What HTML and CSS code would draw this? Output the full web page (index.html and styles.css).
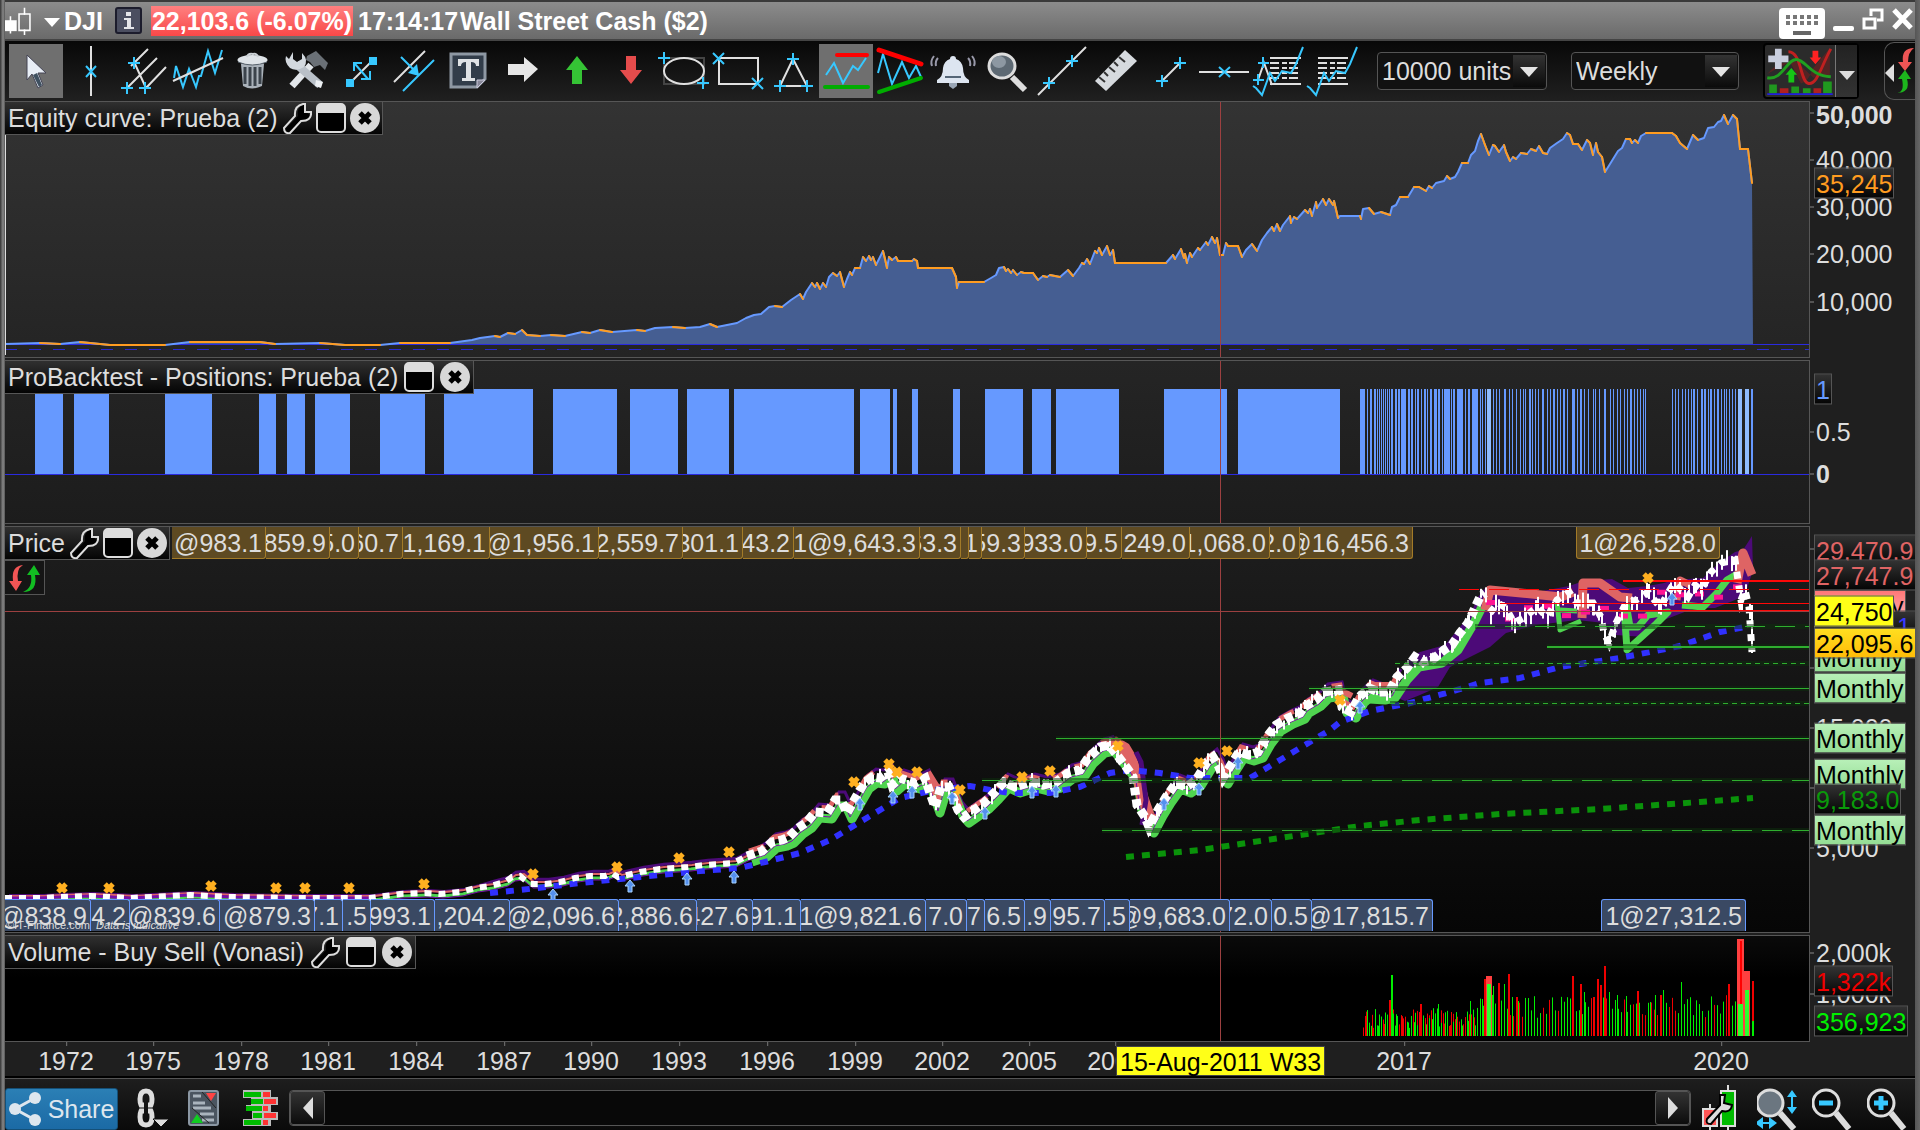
FILE: index.html
```html
<!DOCTYPE html>
<html lang="en">
<head>
<meta charset="utf-8">
<title>DJI - Wall Street Cash ($2)</title>
<link rel="stylesheet" href="styles.css">
</head>
<body>
<div class="app">
<header class="titlebar">
  <svg class="candles" width="50" height="36" viewBox="0 0 50 36"><g stroke="#fff" stroke-width="2" fill="none"><path d="M7 12v22M25 1v9M25 29v7"/><path d="M0 17h15v14H0z" fill="#fff" stroke="none"/><path d="M18 9h14v21H18z"/></g></svg>
  <svg class="caret" width="16" height="9" viewBox="0 0 16 9"><path d="M0 0h16L8 9z" fill="#fff"/></svg>
  <strong class="symbol">DJI</strong>
  <button class="info" aria-label="Instrument information"><svg width="27" height="27" viewBox="0 0 27 27"><rect x="1" y="1" width="25" height="25" rx="2" fill="#4b4e60" stroke="#1c1c2c" stroke-width="2"/><path d="M11 5h5v4h-5zM9 11h7v9h3v2H9v-2h3v-7H9z" fill="#e4e4e8"/></svg></button>
  <strong class="quote">22,103.6 (-6.07%)</strong>
  <strong class="clock">17:14:17</strong>
  <strong class="name">Wall Street Cash ($2)</strong>
  <div class="winbuttons">
    <button aria-label="Keyboard"><svg width="46" height="32" viewBox="0 0 46 32"><rect y="1" width="46" height="31" rx="4" fill="#fff"/><path d="M7 10h33M7 16h33M7 22h33" stroke="#777" stroke-width="4" stroke-dasharray="4 3"/><path d="M6 20h35v4H6z" fill="#fff"/><path d="M14 26h18" stroke="#666" stroke-width="4"/></svg></button>
    <button aria-label="Minimize"><svg width="21" height="32" viewBox="0 0 21 32"><rect y="19" width="21" height="5" rx="2" fill="#fff"/></svg></button>
    <button aria-label="Restore"><svg width="22" height="32" viewBox="0 0 22 32"><path d="M9 9V3h11v10h-5M2 12h11v9H2z" fill="none" stroke="#fff" stroke-width="3"/></svg></button>
    <button aria-label="Close"><svg width="22" height="32" viewBox="0 0 22 32"><path d="M2 3l17 18M19 3L2 21" stroke="#fff" stroke-width="5"/></svg></button>
  </div>
</header>

<nav class="toolbar" aria-label="Drawing tools">
  <div class="tools">
  <button class="tool on" aria-label="Select"><svg viewBox="0 0 54 54"><path d="M18 11v25l5-6 6 14 5-3-5-12h8z" fill="#e8eef6" stroke="#445"/><path d="M24 31l6 12 3-2-5-12z" fill="#3f5060"/></svg></button>
  <button class="tool" aria-label="Vertical line"><svg viewBox="0 0 54 54"><path class="g" d="M28 2v50"/><path class="b" d="M23 22l10 11M33 22L23 33"/></svg></button>
  <button class="tool" aria-label="Pitchfork"><svg viewBox="0 0 54 54"><path class="g" d="M14 22L31 5M10 44L40 14M29 44l20-21M18 20l11 24"/><path class="b" d="M17 13v12M11 19h12M10 38v12M4 44h12M28 38v12M22 44h12"/></svg></button>
  <button class="tool" aria-label="Regression"><svg viewBox="0 0 54 54"><path class="b" d="M3 34l2-12 7 21 6-18 7 18 3-11h2l7-25 7 22 7-23"/><path class="g" d="M2 37l50-23"/></svg></button>
  <button class="tool" aria-label="Delete"><svg viewBox="0 0 54 54"><path d="M16 20h23l-2 22q-10 5-19 0z" fill="#aab2ba"/><path d="M20 23v17M25 23v19M30 23v19M35 23v17" stroke="#3b434b" stroke-width="3"/><ellipse cx="27.500" cy="16" rx="15" ry="5" fill="#dfe4e8"/><path d="M22 13q1-4 6-3 4-1 5 3" fill="none" stroke="#ccd2d6" stroke-width="2"/><path d="M13 18q14 6 29 0" stroke="#56606a" fill="none"/></svg></button>
  <button class="tool" aria-label="Settings"><svg viewBox="0 0 54 54"><path d="M28 12l9-5 12 12-3 7-5-5-6 2-4-5-4-2z" fill="#6a7076"/><path d="M32 21L13 42" stroke="#e2e6ea" stroke-width="7"/><path d="M17 20l24 21" stroke="#b9c0c8" stroke-width="8"/><path d="M14 8v7l4 3 5-3V9q7 7 2 14-8 5-14 1-6-6-4-12l3 3z" fill="#d3d9df"/><path d="M37 36l7 2-2 6-6-2z" fill="#edf0f3"/></svg></button>
  <button class="tool" aria-label="Fibonacci extension"><svg viewBox="0 0 54 54"><path class="g" d="M17 39l22-22"/><path class="b" d="M22 20l13 15M21 27v-8h8M37 27v8h-9"/><path d="M36 13h8v8h-8zM13 35h8v8h-8z" fill="#37c8ff"/></svg></button>
  <button class="tool" aria-label="Parallel lines"><svg viewBox="0 0 54 54"><path class="g" d="M7 38L38 7"/><path class="b" d="M16 47l31-31M14 13l17 17"/><path d="M32 32l-2-12-9 9z" fill="#37c8ff"/></svg></button>
  <button class="tool" aria-label="Text"><svg viewBox="0 0 54 54"><path d="M10 10h34v25l-8 8H10z" fill="#323d4a" stroke="#8e98a3" stroke-width="3"/><path d="M17 15h21v7h-3q0-4-5-4v16h4v3H21v-3h4V18q-5 0-5 4h-3z" fill="#dfe2e5"/><path d="M36 44v-8h8z" fill="#889" stroke="#ccd"/></svg></button>
  <button class="tool" aria-label="Right arrow"><svg viewBox="0 0 54 54"><path d="M13 20h16v-7l14 12-14 13v-7H13z" fill="#e6e6e6"/></svg></button>
  <button class="tool" aria-label="Up arrow"><svg viewBox="0 0 54 54"><path d="M28 12l11 14h-6v14H23V26h-6z" fill="#35c335"/></svg></button>
  <button class="tool" aria-label="Down arrow"><svg viewBox="0 0 54 54"><path d="M28 40l11-14h-6V12H23v14h-6z" fill="#e54c4c"/></svg></button>
  <button class="tool" aria-label="Ellipse"><svg viewBox="0 0 54 54"><path d="M7 14h40v26H7z" fill="none" stroke="#444" stroke-width="2"/><ellipse class="g" cx="27" cy="27" rx="20" ry="13"/><path class="b" d="M7 8v12M1 14h12M46 33v12M40 39h12"/></svg></button>
  <button class="tool" aria-label="Rectangle"><svg viewBox="0 0 54 54"><path class="g" d="M8 14h39v26H8z"/><path class="b" d="M2 9l11 11M13 9L2 20M41 34l11 11M52 34L41 45"/></svg></button>
  <button class="tool" aria-label="Triangle"><svg viewBox="0 0 54 54"><path class="g" d="M28 15L15 42h27z"/><path class="b" d="M28 9v12M22 15h12M15 36v12M9 42h12M42 36v12M36 42h12"/></svg></button>
  <button class="tool on" aria-label="Support and resistance"><svg viewBox="0 0 54 54"><path class="b" d="M7 31l8-12 9 20 10-17 5 4 8-12"/><path d="M18 11h30" stroke="#f00" stroke-width="4" stroke-linecap="round"/><path d="M6 43h43" stroke="#00ac00" stroke-width="4" stroke-linecap="round"/></svg></button>
  <button class="tool" aria-label="Pattern detection"><svg viewBox="0 0 54 54"><path class="b" d="M5 29l5-19 9 30 10-22 7 16 7-12 5 11"/><path d="M6 6l42 14" stroke="#f00" stroke-width="5" stroke-linecap="round"/><path d="M6 48l42-14" stroke="#00ac00" stroke-width="4" stroke-linecap="round"/></svg></button>
  <button class="tool" aria-label="Alert"><svg viewBox="0 0 54 54"><path d="M26 12q3 0 3 3 6 2 7 9 0 9 6 12v3H10v-3q6-3 6-12 1-7 7-9 0-3 3-3z" fill="#dde5f0"/><path d="M18 33h16" stroke="#567" stroke-width="2"/><path d="M22 39h8v3l-4 3-4-3z" fill="#9aa6b5"/><path d="M11 14q-3 3-2 8M7 12q-4 5-2 10M41 14q3 3 2 8M45 12q4 5 2 10" fill="none" stroke="#99a" stroke-width="2"/></svg></button>
  <button class="tool" aria-label="Zoom"><svg viewBox="0 0 54 54"><path d="M31 33l13 13" stroke="#ddd" stroke-width="6"/><ellipse cx="21" cy="22" rx="13" ry="12" fill="#5d6973" stroke="#ddd" stroke-width="3"/><ellipse cx="18" cy="18" rx="7" ry="6" fill="#8d98a2"/></svg></button>
  <button class="tool" aria-label="Line"><svg viewBox="0 0 54 54"><path class="g" d="M3 51L51 3"/><path class="b" d="M14 33v12M8 39h12M37 11v12M31 17h12"/></svg></button>
  <button class="tool" aria-label="Ruler"><svg viewBox="0 0 54 54"><path d="M6 37L36 6l12 11-31 30z" fill="#d6dade"/><path d="M10 33l6 5M15 28l4 4M20 23l6 5M25 18l4 4M30 13l6 5" stroke="#333" stroke-width="2"/></svg></button>
  <button class="tool" aria-label="Segment"><svg viewBox="0 0 54 54"><path class="g" d="M19 37l18-18"/><path class="b" d="M19 31v12M13 37h12M37 13v12M31 19h12"/></svg></button>
  <button class="tool" aria-label="Horizontal line"><svg viewBox="0 0 54 54"><path class="g" d="M2 28h50"/><path class="b" d="M22 23l11 10M33 23L22 33"/></svg></button>
  <button class="tool" aria-label="Fibonacci retracement"><svg viewBox="0 0 54 54"><path class="g" d="M19 14h31M19 40h31"/><path class="g" d="M19 19h31M19 24h31M19 29h31M19 34h31" stroke-dasharray="9 3 5 2"/><path class="g" d="M7 36l6-17 8 22"/><path class="b" d="M2 42l3 2 6 7 4-11 4-11 5 8 7-10 9 2 5-9 7-17M12 13v11M7 19h11M7 30v11M2 36h11"/></svg></button>
  <button class="tool" aria-label="Automatic retracement"><svg viewBox="0 0 54 54"><path class="g" d="M13 14h30M13 40h30"/><path class="g" d="M13 19h30M13 24h30M13 29h30M13 34h30" stroke-dasharray="9 3 5 2"/><path class="b" d="M2 42l3 2 6 7 4-11 4-11 5 8 7-10 9 2 5-9 7-17"/></svg></button>
  </div>
  <label class="combo"><select aria-label="Units"><option>10000 units</option></select><span class="drop"></span></label>
  <label class="combo"><select aria-label="Time frame"><option>Weekly</option></select><span class="drop"></span></label>
  <div class="split">
    <button class="indicator" aria-label="Add indicator"><svg width="70" height="52" viewBox="0 0 72 54"><path d="M2 30Q16 14 27 20l10 20q8-2 12-15l18-22v28L50 34 30 15z" fill="#622" opacity=".7"/><path d="M24 7c14 0 12 32 21 33S58 22 68 4" fill="none" stroke="#c02020" stroke-width="3"/><path d="M2 34C18 37 22 15 32 15S46 32 68 33" fill="none" stroke="#20a020" stroke-width="3"/><path d="M10 4h7v7h7v7h-7v7h-7v-7H3v-7h7z" fill="#c9cede"/><path d="M27 24l6 7h-3v8h-6v-8h-3z" fill="#16c516"/><path d="M52 20l6-7h-3V6h-6v7h-3z" fill="#f22"/><path d="M4 41h8v9H4zM27 43h8v7h-8zM39 45h8v5h-8zM60 38h9v12h-9z" fill="#20981f"/><path d="M15 45h9v5h-9zM50 45h8v5h-8z" fill="#b02020"/><path d="M2 51h68" stroke="#22d" stroke-width="2"/></svg></button><button class="more" aria-label="Indicator menu"><svg width="16" height="9" viewBox="0 0 16 9"><path d="M0 0h16L8 9z" fill="#ddd"/></svg></button>
  </div>
  <button class="sidetab" aria-label="Trading panel"><svg width="30" height="58" viewBox="0 0 30 58"><path d="M0 31l9-9v18z" fill="#ddd"/><path d="M29 6q-13 0-11 14h-5l7 9 7-9h-4q0-10 6-14z" fill="#e55"/><path d="M11 51q9 0 6-14h-4l7-9 6 9h-4q4 14-11 14z" fill="#1db51d"/></svg></button>
</nav>

<svg class="defs" width="0" height="0" aria-hidden="true"><defs>
  <symbol id="wrench" viewBox="0 0 30 32"><path d="M4 27L16 14Q14 6 21 3h3v7l4 3q2 6-7 6L7 31z" fill="#000"/><path d="M2 26l11-12Q12 4 21 2h2v8h6q1 9-10 9L8 31q-6 1-6-5z" fill="none" stroke="#ddd" stroke-width="2"/></symbol>
  <symbol id="window" viewBox="0 0 30 32"><rect x="1" y="2" width="28" height="28" rx="4" fill="#000" stroke="#ddd" stroke-width="2"/><path d="M1 11V6q0-4 4-4h20q4 0 4 4v5z" fill="#ddd"/></symbol>
  <symbol id="close" viewBox="0 0 30 32"><circle cx="15" cy="16" r="15" fill="#d8d8d8"/><path d="M10 11l10 10M20 11L10 21" stroke="#000" stroke-width="5"/></symbol>
  <symbol id="mark" viewBox="0 0 12 12"><path d="M2 2l8 8M10 2l-8 8" stroke="#ffb020" stroke-width="5"/></symbol>
  <symbol id="buy" viewBox="0 0 12 14"><path d="M6 1l5 6H8v6H4V7H1z" fill="#5590ee" stroke="#a8d4ff"/></symbol>
</defs></svg>

<main class="panels">
  <section class="panel equity">
    <div class="plot">
      <svg class="chart" id="equity" viewBox="5 102 1804 255" preserveAspectRatio="none"></svg>
      <h2 class="head">Equity curve: Prueba (2)<button aria-label="Configure"><svg><use href="#wrench"/></svg></button><button aria-label="Maximize"><svg><use href="#window"/></svg></button><button aria-label="Close"><svg><use href="#close"/></svg></button></h2>
    </div>
    <div class="scale">
      <i style="--y:11"></i><i style="--y:58"></i><i style="--y:105"></i><i style="--y:152"></i><i style="--y:200"></i>
      <b style="--y:13">50,000</b><span style="--y:58">40,000</span><span style="--y:105">30,000</span><span style="--y:152">20,000</span><span style="--y:200">10,000</span>
      <span class="tag orange" style="--y:81">35,245</span>
    </div>
  </section>

  <section class="panel positions">
    <div class="plot">
      <svg class="chart" id="positions" viewBox="5 361 1804 162" preserveAspectRatio="none"></svg>
      <h2 class="head wide">ProBacktest - Positions: Prueba (2)<button aria-label="Maximize"><svg><use href="#window"/></svg></button><button aria-label="Close"><svg><use href="#close"/></svg></button></h2>
    </div>
    <div class="scale">
      <i style="--y:71"></i><i style="--y:113"></i>
      <span style="--y:71">0.5</span><b style="--y:113">0</b>
      <span class="tag blue" style="--y:28">1</span>
    </div>
  </section>

  <section class="panel price">
    <div class="plot">
      <svg class="chart" id="price" viewBox="5 527 1804 405" preserveAspectRatio="none"></svg>
      <div class="trades sells">
        <span>@983.1</span><span>859.9</span><span>5.0</span><span>60.7</span><span>1,169.1</span><span>@1,956.1</span><span>2,559.7</span><span>301.1</span><span>43.2</span><span>1@9,643.3</span><span>63.3</span><span></span><span>1</span><span>59.3</span><span>933.0</span><span>9.5</span><span>249.0</span><span>1,068.0</span><span>2.0</span><span>@16,456.3</span><span class="last">1@26,528.0</span>
      </div>
      <div class="trades buys">
        <span>@838.9</span><span>4.2</span><span>@839.6</span><span>@879.3</span><span>7.1</span><span>.5</span><span>993.1</span><span>,204.2</span><span>@2,096.6</span><span>2,886.6</span><span>427.6</span><span>91.1</span><span>1@9,821.6</span><span>7.0</span><span>7</span><span>6.5</span><span>.9</span><span>95.7</span><span>.5</span><span>@9,683.0</span><span>72.0</span><span>0.5</span><span>@17,815.7</span><span class="last">1@27,312.5</span>
      </div>
      <small class="credit">©IT-Finance.com <em>Data is indicative</em></small>
      <h2 class="head">Price<button aria-label="Configure"><svg><use href="#wrench"/></svg></button><button aria-label="Maximize"><svg><use href="#window"/></svg></button><button aria-label="Close"><svg><use href="#close"/></svg></button></h2>
      <button class="swap" aria-label="Trading"><svg width="34" height="32" viewBox="0 0 34 32"><path d="M15 3Q3 4 5 19H1l7 10 6-10h-4Q8 7 15 3z" fill="#f25555"/><path d="M15 30q15 0 12-17h5L26 3l-7 10h4q2 13-8 17z" fill="#12bd22"/></svg></button>
    </div>
    <div class="scale">
      <i style="--y:22"></i><i style="--y:141"></i><i style="--y:201"></i><i style="--y:261"></i><i style="--y:321"></i>
      <span style="--y:201">15,000</span><span style="--y:321">5,000</span>
      <span class="tag red wide" style="--y:23">29,470.9</span>
      <span class="tag rose" style="--y:78">Monthly</span>
      <span class="tag red wide" style="--y:48">27,747.9</span>
      <span class="tag navy wide" style="--y:99">1</span>
      <span class="tag month" style="--y:130">Monthly</span>
      <span class="tag gold wide" style="--y:116">22,095.6</span>
      <span class="tag yellow" style="--y:84">24,750</span>
      <span class="tag month" style="--y:161">Monthly</span>
      <span class="tag month" style="--y:211">Monthly</span>
      <span class="tag month" style="--y:247">Monthly</span>
      <span class="tag green" style="--y:272">9,183.0</span>
      <span class="tag month" style="--y:303">Monthly</span>
    </div>
  </section>

  <section class="panel volume">
    <div class="plot">
      <svg class="chart" id="volume" viewBox="5 936 1804 105" preserveAspectRatio="none"></svg>
      <h2 class="head wide">Volume - Buy Sell (Vonasi)<button aria-label="Configure"><svg><use href="#wrench"/></svg></button><button aria-label="Maximize"><svg><use href="#window"/></svg></button><button aria-label="Close"><svg><use href="#close"/></svg></button></h2>
    </div>
    <div class="scale">
      <i style="--y:17"></i><i style="--y:58"></i>
      <span style="--y:17">2,000k</span><span style="--y:58">1,000k</span>
      <span class="tag crimson" style="--y:45">1,322k</span>
      <span class="tag lime" style="--y:85">356,923</span>
    </div>
  </section>
</main>

<div class="timeaxis"><div class="years">
  <span style="--x:61">1972</span><span style="--x:148">1975</span><span style="--x:236">1978</span><span style="--x:323">1981</span><span style="--x:411">1984</span><span style="--x:499">1987</span><span style="--x:586">1990</span><span style="--x:674">1993</span><span style="--x:762">1996</span><span style="--x:850">1999</span><span style="--x:937">2002</span><span style="--x:1024">2005</span><span style="--x:1110">2008</span><span style="--x:1399">2017</span><span style="--x:1716">2020</span>
  <time class="cursor" datetime="2011-08-15">15-Aug-2011 W33</time>
</div></div>

<footer class="bottombar">
  <button class="share"><svg width="33" height="34" viewBox="0 0 33 34"><path d="M26 6L6 17l20 11" fill="none" stroke="#dde6ee" stroke-width="3"/><g fill="#dde6ee"><circle cx="26" cy="6" r="6"/><circle cx="6" cy="17" r="6"/><circle cx="26" cy="28" r="6"/></g></svg>Share</button>
  <button class="tb" aria-label="Link windows"><svg width="34" height="40" viewBox="0 0 34 40"><g fill="none" stroke="#ddd" stroke-width="5"><path d="M8 17H5q-1-2-1-6 0-8 6-8t6 8q0 4-1 6h-3M8 23H5q-1 2-1 6 0 8 6 8t6-8q0-4-1-6h-3"/></g><path d="M17 31h16l-8 8z" fill="#ddd" stroke="#111"/></svg></button>
  <button class="tb" aria-label="Order list"><svg width="32" height="36" viewBox="0 0 32 36"><rect x="1" y="1" width="29" height="34" rx="2" fill="#4b5560" stroke="#8b97a3" stroke-width="2"/><path d="M5 6h8M5 13h12M5 18h18M12 24h14M14 30h12" stroke="#aab4bd" stroke-width="3"/><path d="M14 2l14 16M4 18l17 15" stroke="#222" stroke-width="1"/><path d="M18 3h10l-5 8z" fill="#f44"/><path d="M3 33h12l-6-9z" fill="#1c2"/></svg></button>
  <button class="tb" aria-label="Order book"><svg width="36" height="36" viewBox="0 0 36 36"><path d="M1 0h28v7h7v8h-7v7h7v8h-7v6H1v-7h9v-8H4v-6h5V8H1z" fill="#bbb"/><path d="M2 2h17v5H2zM9 9h12v5H9zM4 16h16v5H4zM11 23h9v5h-9zM2 30h17v5H2z" fill="#0b0"/><path d="M21 2h7v5h-7zM22 9h12v5H22zM21 16h5v5h-5zM22 23h12v5H22zM21 30h5v5h-5z" fill="#f33"/></svg></button>
  <div class="scroll"><button aria-label="Scroll left"><svg width="12" height="24" viewBox="0 0 12 24"><path d="M11 1v22L1 12z" fill="#ddd"/></svg></button><div class="track"></div><button aria-label="Scroll right"><svg width="12" height="24" viewBox="0 0 12 24"><path d="M1 1v22l10-11z" fill="#ddd"/></svg></button></div>
  <button class="zoom" aria-label="Chart settings"><svg width="44" height="46" viewBox="0 0 44 46"><path d="M8 19v26M26 0v46" stroke="#ddd" stroke-width="2"/><path d="M1 24h14v17H1z" fill="#f55" stroke="#ddd" stroke-width="2"/><path d="M19 6h14v35H19z" fill="#0b0" stroke="#ddd" stroke-width="2"/><path d="M5 34l13-14V10h5l-1 8 8 2q-1 8-10 6L9 39q-6 0-4-5z" fill="#ddd" stroke="#000" stroke-width="2"/></svg></button>
  <button class="zoom" aria-label="Fit zoom"><svg width="44" height="46" viewBox="0 0 44 46"><path d="M23 28l14 16" stroke="#ddd" stroke-width="6"/><ellipse cx="13" cy="18" rx="13" ry="13" fill="#6b7680" stroke="#ddd" stroke-width="3"/><path class="b" d="M35 9v17M4 38h14"/><path d="M35 5l5 7H30zM35 29l5-7H30zM-2 38l8-6v12zM20 38l-8-6v12z" fill="#37c8ff"/></svg></button>
  <button class="zoom" aria-label="Zoom out"><svg width="44" height="46" viewBox="0 0 44 46"><path d="M24 28l13 16" stroke="#ddd" stroke-width="6"/><circle cx="14" cy="18" r="13" fill="#0b0b0b" stroke="#ddd" stroke-width="3"/><path d="M7 18h14" stroke="#37c8ff" stroke-width="5"/></svg></button>
  <button class="zoom" aria-label="Zoom in"><svg width="44" height="46" viewBox="0 0 44 46"><path d="M24 28l13 16" stroke="#ddd" stroke-width="6"/><circle cx="14" cy="18" r="13" fill="#0b0b0b" stroke="#ddd" stroke-width="3"/><path d="M7 18h14M14 11v14" stroke="#37c8ff" stroke-width="5"/></svg></button>
</footer>
</div>
<script src="charts.js"></script>
</body>
</html>
```
FILE: styles.css
```css
* { box-sizing: border-box; }
body { margin: 0; background: #1f1f1f; color: #ddd; font: 25px/30px "Liberation Sans", Arial, sans-serif; }
button { border: 0; padding: 0; background: none; color: inherit; font: inherit; display: flex; align-items: center; justify-content: center; }
svg { display: block; }
.defs { position: absolute; }
.app { min-height: 100vh; display: flex; flex-direction: column; border: 5px solid #5a5a5a; border-width: 0 5px; border-image: linear-gradient(90deg, #333 0, #888 3px, #555 5px, #555 calc(100% - 5px), #666) 5; overflow: hidden; }

/* title bar */
.titlebar { height: 41px; flex: none; display: flex; align-items: center; color: #fff; border-top: 2px solid #3a3a3a; border-bottom: 2px solid #444; background: linear-gradient(#8c8c8c, #6a6a6a); white-space: nowrap; }
.candles { width: 39px; flex: none; }
.caret { margin: 4px 4px 0 0; flex: none; }
.symbol { margin-right: 12px; }
.quote { margin: 0 5px 0 9px; padding: 0 1px; background: linear-gradient(#ff8080, #f84848); }
.clock { margin-right: 2px; }
.winbuttons { margin-left: auto; display: flex; gap: 8px; padding: 5px 1px 0 0; }

/* toolbar */
.toolbar { height: 60px; flex: none; display: flex; align-items: center; padding: 0 0 0 4px; background: linear-gradient(#080808, #202020); }
.tools { display: flex; flex: none; }
.tool, .tool svg { width: 54px; height: 54px; }
.tool.on { background: #6f6f6f; }
.g { fill: none; stroke: #e0e0e0; stroke-width: 2; }
.b { fill: none; stroke: #37c8ff; stroke-width: 2; }
.combo { position: relative; width: 170px; height: 38px; margin-left: 18px; border: 1px solid #555; border-radius: 4px; background: #111; }
.combo + .combo { margin-left: 24px; width: 168px; }
.combo select { width: 100%; height: 36px; padding: 0 0 0 4px; border: 0; appearance: none; background: none; color: #ddd; font: inherit; }
.drop { position: absolute; right: 1px; top: 2px; width: 32px; height: 32px; background: linear-gradient(#333, #0b0b0b); pointer-events: none; }
.drop::after { content: ""; position: absolute; left: 7px; top: 12px; border: 9px solid transparent; border-top: 10px solid #e4e4e4; border-bottom: 0; }
.split { display: flex; height: 56px; margin-left: 24px; border: 2px solid #000; border-radius: 4px; background: #2b2b2b; }
.more { width: 22px; border-left: 1px solid #777; padding-top: 8px; background: linear-gradient(#222, #333); }
.sidetab { width: 31px; height: 58px; margin-left: auto; border: 1px solid #555; border-right: 0; border-radius: 10px 0 0 10px; }

/* chart panels */
.panels { flex: 1; display: grid; grid-template-rows: minmax(0, 257fr) minmax(0, 164fr) minmax(0, 407fr) minmax(0, 107fr); gap: 2px; }
.panel { display: grid; grid-template-columns: minmax(0, 1fr) 105px; }
.plot { position: relative; border: 1px solid #565656; border-left: 0; overflow: hidden; }
.equity { --h: 255; } .positions { --h: 162; } .price { --h: 405; } .volume { --h: 105; }
.equity .plot { background: linear-gradient(#333, #242424); }
.positions .plot { background: linear-gradient(#252525, #1c1c1c); }
.price .plot { background: linear-gradient(#1e1e1e, #060606); }
.volume .plot { background: linear-gradient(#0a0a0a, #000 40%); }
.chart { position: absolute; inset: 0; width: 100%; height: 100%; }
.head { position: absolute; top: 0; left: 0; height: 33px; margin: 0; padding: 0 2px 0 3px; display: flex; align-items: center; gap: 4px; font: inherit; border: 1px solid #565656; border-width: 0 1px 1px 0; background: linear-gradient(#303030, #040404); white-space: nowrap; }
.head.wide { gap: 6px; padding-right: 3px; }
.head svg { width: 30px; height: 32px; }
.swap { position: absolute; left: 0; top: 33px; width: 40px; height: 35px; border: 1px solid #555; border-left: 0; background: #151515; }

.scale { position: relative; margin: 1px -4px 1px 0; white-space: nowrap; }
.scale > * { position: absolute; left: 6px; top: calc(var(--y) / var(--h) * 100%); translate: 0 -50%; }
.scale > i { left: 0; width: 4px; height: 1px; background: #888; }
.scale > .tag { left: 4px; height: 31px; padding: 0 1px; border: 1px solid #555; background: linear-gradient(#333, #050505); }
.scale > .wide { width: 103px; }
.orange { color: #ff9c20; } .blue { color: #6699ff; } .red { color: #e06464; } .green { color: #0a9a0a; } .crimson { color: #f00000; } .lime { color: #00f000; }
.scale > .navy { color: #3a3aff; text-align: right; padding-right: 5px; }
.rose, .month, .gold, .yellow { color: #000; }
.scale > .rose { background: linear-gradient(#f77, #faa); }
.scale > .month { background: linear-gradient(#b8f0b8, #94dc94); }
.scale > .gold { background: linear-gradient(#ffdf20, #ffbc08); }
.scale > .yellow { background: #ffff18; }

.trades { position: absolute; left: 0; right: 0; height: 32px; display: grid; }
.trades span { display: flex; justify-content: flex-end; align-items: center; overflow: hidden; padding-right: 3px; border-right: 1px solid; }
.sells { top: 0; grid-template-columns: 167fr 94fr 64fr 29fr 44fr 87fr 109fr 84fr 60fr 51fr 126fr 41fr 8fr 13fr 43fr 62fr 35fr 68fr 80fr 30fr 113fr 163fr 144fr 89fr; }
.sells span { background: #5e4a22; border-bottom: 1px solid; border-color: #a37b28; border-radius: 0 0 3px 0; }
.sells span:first-child { grid-column: 2; }
.sells .last { grid-column: 23; border-left: 1px solid #a37b28; border-radius: 0 0 3px 3px; }
.buys { bottom: 0; height: 33px; padding-bottom: 1px; grid-template-columns: 86fr 39fr 90fr 95fr 28fr 28fr 64fr 75fr 109fr 78fr 56fr 48fr 125fr 41fr 18fr 40fr 26fr 54fr 25fr 100fr 42fr 40fr 121fr 168fr 145fr 63fr; }
.buys span { background: #3a4963; border-top: 1px solid; border-color: #6699ff; border-radius: 0 3px 0 0; }
.buys .last { grid-column: 25; border-left: 1px solid #6699ff; border-radius: 3px 3px 0 0; }
.credit { position: absolute; left: 1px; bottom: 1px; font-size: 11px; line-height: 12px; }
.credit em { margin-left: 3px; }

/* time axis */
.timeaxis { height: 36px; flex: none; padding-right: 106px; border-bottom: 2px solid #000; }
.years { position: relative; height: 100%; }
.years span { position: absolute; top: 4px; left: calc(var(--x) / 1804 * 100%); translate: -50% 0; }
.years span::before { content: ""; position: absolute; top: -4px; left: 50%; width: 1px; height: 4px; background: #777; }
.cursor { position: absolute; left: calc(1111 / 1804 * 100%); top: 4px; height: 30px; padding: 0 3px; color: #000; background: #ffff18; border: 1px solid #444; white-space: nowrap; }

/* bottom bar */
.bottombar { height: 52px; flex: none; display: flex; align-items: center; border-top: 1px solid #555; background: linear-gradient(#1e1e1e, #0a0a0a); overflow: hidden; }
.share { width: 113px; height: 42px; margin: 8px 18px 0 0; gap: 6px; color: #dde6ee; background: linear-gradient(#2b7fb5, #1b6aa5); border: 1px solid #145078; border-radius: 3px; }
.tb { margin: 6px 18px 0 0; }
.tb + .tb { margin-right: 22px; }
.tb + .tb + .tb { margin-right: 11px; }
.scroll { flex: 1; display: flex; height: 36px; margin: 6px 11px 0 0; border: 1px solid #555; border-radius: 4px; background: #080808; }
.scroll button { width: 35px; background: linear-gradient(#333, #0c0c0c); border: 1px solid #555; border-radius: 3px; }
.track { flex: 1; }
.zoom { margin: 6px 11px 0 0; }
.zoom:last-child { margin-right: 4px; }
```
FILE: charts.js
```js
const NS = 'http://www.w3.org/2000/svg';
let seed = 7;
const rnd = () => (seed = (seed * 16807) % 2147483647) / 2147483647;
const pairs = s => s.trim().split(/\s+/).map(p => p.split(',').map(Number));
function add(svg, tag, attrs) {
  const el = document.createElementNS(NS, tag);
  for (const k in attrs) el.setAttribute(k, attrs[k]);
  svg.appendChild(el);
  return el;
}
const line = (svg, pts, stroke, width, more) =>
  add(svg, 'polyline', { points: pts.map(p => p.join()).join(' '), fill: 'none', stroke, 'stroke-width': width, ...more });
const rect = (svg, x, y, width, height, fill) => add(svg, 'rect', { x, y, width, height, fill });
const vcursor = svg => rect(svg, 1220, 0, 1, 1130, '#9c4040');

/* equity curve */
const eq = document.getElementById('equity');
const equity = pairs(`5,344 40,343 60,344 80,342 110,345 165,345 190,342 260,342 275,344 320,343 345,345 380,345 400,343 430,343 450,343 472,340 480,338 495,336 500,337 508,333 515,334 522,330 527,335 540,336 551,335 565,336 582,332 590,333 600,330 612,332 637,330 645,331 655,328 673,327 685,328 700,327 710,324 717,327 737,323 746,318 754,315 761,314 769,307 775,306 782,307 791,300 800,294 803,299 806,292 812,283 815,287 817,283 820,289 823,283 826,287 829,277 833,273 837,276 840,272 844,287 847,279 850,272 852,275 855,268 860,268 863,257 866,261 869,256 871,260 873,257 876,265 879,259 883,251 885,259 887,268 889,257 892,260 896,257 898,261 912,261 914,259 917,261 918,268 952,268 956,277 957,288 959,282 984,282 991,278 996,275 999,268 1004,267 1006,271 1008,269 1011,273 1013,270 1017,275 1021,272 1024,273 1033,273 1038,280 1043,276 1047,277 1050,275 1060,277 1068,270 1073,276 1079,268 1082,263 1084,264 1087,259 1090,264 1095,251 1097,253 1099,248 1102,255 1107,246 1110,255 1113,250 1115,263 1166,263 1173,255 1175,259 1181,249 1184,258 1185,254 1187,263 1190,253 1192,257 1198,248 1200,250 1206,242 1208,245 1212,237 1215,243 1217,238 1220,255 1223,255 1226,243 1228,246 1238,246 1242,257 1246,250 1252,244 1257,251 1262,240 1267,233 1272,227 1274,231 1277,224 1280,231 1283,225 1290,216 1291,223 1294,217 1297,219 1305,210 1308,213 1310,209 1312,216 1316,202 1317,208 1323,199 1326,205 1329,199 1333,205 1334,201 1338,218 1340,216 1360,216 1361,219 1363,209 1369,208 1374,214 1381,212 1390,215 1392,207 1396,205 1400,197 1408,197 1414,187 1419,187 1426,191 1429,186 1432,188 1436,183 1444,181 1447,176 1450,179 1455,177 1458,172 1462,163 1468,163 1471,155 1475,151 1478,141 1481,134 1485,145 1489,155 1493,145 1495,146 1499,152 1504,145 1506,152 1510,161 1513,157 1516,159 1521,153 1527,154 1531,149 1536,151 1539,146 1543,153 1547,154 1550,148 1557,143 1563,139 1567,133 1570,135 1573,144 1578,144 1582,150 1587,140 1590,143 1593,155 1596,143 1598,152 1602,157 1605,172 1610,164 1618,151 1622,148 1626,139 1630,139 1632,143 1635,140 1638,143 1641,136 1646,133 1672,133 1676,136 1680,143 1687,149 1693,135 1698,140 1704,138 1708,128 1714,127 1718,122 1721,121 1724,115 1728,124 1733,115 1737,119 1740,149 1748,149 1752,183`);
add(eq, 'polygon', { points: equity.join(' ') + ' 1753,344 5,344', fill: '#455e92' });
rect(eq, 5, 344, 1804, 1, '#2a2ae0');
line(eq, [[5, 349.5], [1809, 349.5]], '#2a2ad0', 1, { 'stroke-dasharray': '12 12' });
line(eq, equity, '#6699ff', 2, { 'stroke-linejoin': 'round' });
for (let i = 1; i < equity.length; i++)
  if (equity[i][1] >= equity[i - 1][1] && equity[i][0] !== 1360) line(eq, [equity[i - 1], equity[i]], '#ff9c20', 2, { 'stroke-linecap': 'round' });
rect(eq, 5, 135, 1, 220, '#ddd');
vcursor(eq);

/* open positions */
const pos = document.getElementById('positions');
pairs(`35,63 74,109 165,212 259,276 287,305 315,350 380,425 444,533 553,617 630,678 687,729 734,854 860,890 893,897 912,918 953,960 985,1023 1032,1051 1056,1119 1164,1227 1238,1340`)
  .forEach(([a, b]) => rect(pos, a, 389, b - a, 85, '#6699ff'));
const stripes = pairs(`1360,5 1367,1 1370,2 1374,2 1377,1 1379,1 1381,1 1383,1 1385,1 1387,1 1389,1 1391,2 1395,2 1398,2 1401,5 1408,2 1411,2 1415,1 1417,2 1421,1 1424,2 1427,1 1430,2 1434,3 1438,2 1442,1 1444,6 1451,1 1453,2 1457,6 1465,1 1468,2 1472,6 1480,1 1482,1 1485,1 1493,1 1496,1 1499,1 1504,2 1509,1 1512,1 1516,1 1520,1 1523,1 1525,1 1529,2 1532,1 1535,1 1538,1 1542,2 1547,1 1550,1 1553,2 1557,1 1560,1 1563,2 1567,1 1572,3 1577,1 1580,2 1584,1 1588,1 1593,1 1595,1 1599,1 1604,2 1610,1 1613,1 1617,1 1620,1 1624,1 1627,1 1630,2 1634,1 1637,1 1640,1 1643,1 1645,1 1672,1 1675,1 1678,1 1682,1 1685,1 1688,1 1691,1 1693,2 1697,1 1701,2 1704,2 1708,1 1710,2 1714,1 1717,2 1721,1 1724,1 1726,1 1729,1 1732,1 1735,1 1751,2`);
stripes.forEach(([x, w]) => rect(pos, x, 389, w, 85, '#6699ff'));
[1487, 1738, 1745].forEach(x => rect(pos, x, 389, 4, 85, '#8fbcff'));
rect(pos, 5, 474, 1804, 1, '#2a2ae0');
vcursor(pos);

/* price */
const pr = document.getElementById('price');
const price = pairs(`5,898 40,898 60,897 90,896 130,898 190,895 230,897 300,898 370,898 385,896 400,894 425,893 440,894 460,892 475,888 490,886 505,882 512,877 520,876 530,884 545,884 560,882 575,878 590,876 605,876 612,873 618,877 640,872 660,869 675,868 688,867 704,865 733,863 747,856 762,851 772,842 782,840 789,837 798,828 807,822 815,812 827,813 835,800 841,800 847,813 856,797 864,783 872,777 880,778 888,772 892,785 900,778 915,783 925,778 930,793 935,807 941,787 949,787 958,810 964,817 974,810 984,803 994,793 1004,782 1015,787 1031,782 1043,785 1056,782 1068,773 1080,770 1088,758 1100,747 1109,745 1117,755 1127,768 1133,777 1137,805 1145,817 1149,827 1158,810 1166,797 1176,783 1186,787 1196,780 1207,762 1213,757 1219,767 1223,778 1229,768 1239,752 1249,755 1258,752 1266,738 1276,725 1288,718 1300,713 1304,707 1316,700 1324,692 1338,690 1342,707 1351,712 1359,697 1369,688 1379,692 1389,692 1397,677 1407,668 1415,657 1423,662 1432,660 1444,650 1452,645 1460,633 1468,623 1474,610 1480,597 1485,593 1490,613 1498,603 1506,608 1514,623 1525,617 1537,607 1547,617 1557,600 1569,592 1577,603 1593,603 1601,617 1604,633 1609,643 1616,623 1626,603 1636,600 1648,592 1660,607 1674,583 1688,597 1695,585 1701,590 1711,572 1721,563 1735,560 1741,600 1745,590 1749,607 1752,652`);
const purple = '#4c0a78';
add(pr, 'polygon', { fill: purple, points: '1395,697 1410,658 1420,652 1445,645 1470,615 1478,597 1486,587 1537,592 1569,586 1581,582 1600,580 1612,579 1628,588 1648,586 1664,583 1672,580 1703,578 1719,563 1735,552 1743,550 1752,536 1753,570 1745,595 1735,600 1715,608 1695,608 1656,623 1644,637 1616,635 1604,623 1577,620 1537,625 1506,633 1490,647 1470,657 1450,667 1438,687 1420,695 1405,701' });
const early = price.filter(p => p[0] < 1400);
const shift = (pts, dx, dy) => pts.map(([x, y]) => [x + dx, y + dy]);
const k = x => x < 480 ? 0.3 : x < 760 ? 0.6 : 1;
line(pr, early.map(([x, y]) => [x + 4, y - 8 * k(x)]), purple, 3);
const big = early.filter(p => p[0] > 740), small = early.filter(p => p[0] <= 747);
line(pr, shift(small, 3, 2), '#4fd44f', 3);
line(pr, shift(small, 4, -2), '#de6464', 2);
line(pr, shift(big, 5, 6), '#4fd44f', 9, { 'stroke-linejoin': 'round' });
line(pr, shift(big, 2, -5), '#de6464', 5, { 'stroke-dasharray': '16 9 24 14' });
line(pr, pairs('1113,741 1125,748 1131,758 1138,778 1143,798 1149,815'), '#de6464', 11);
line(pr, pairs('1136,752 1141,762 1146,800 1142,825'), purple, 5);
line(pr, pairs('928,772 936,785 941,790'), '#de6464', 6);
line(pr, pairs('1370,699 1385,700 1395,698 1407,680 1419,667 1442,663 1458,650 1474,623 1482,607'), '#4fd44f', 9, { 'stroke-linejoin': 'round' });
[['1557,602 1560,630 1581,621', 5], ['1560,610 1577,611', 5], ['1626,603 1630,627 1638,627 1648,615 1668,612 1656,624 1627,650 1624,606', 7], ['1682,605 1703,607 1717,593 1727,580 1739,573', 7]]
  .forEach(([p, w]) => line(pr, pairs(p), '#4fd44f', w, { 'stroke-linejoin': 'round' }));
[['1485,610 1490,590 1561,597 1573,592', 9], ['1582,618 1583,583 1600,583 1620,597 1632,598', 9], ['1340,690 1352,696', 6], ['1371,685 1390,685', 6], ['1677,600 1680,580 1690,585', 7], ['1737,583 1743,553 1752,575', 9]]
  .forEach(([p, w]) => line(pr, pairs(p), '#de6464', w, { 'stroke-linejoin': 'round' }));
line(pr, shift(early, 3, 4), '#7a10a8', 1);
for (let x = 1486; x < 1740; x += 19) rect(pr, x, 600 + rnd() * 18 - (x > 1650 ? 20 : 0), 9, 5, '#ff1493');
[['490,893 520,890 580,883 640,877 700,871 740,868 765,862 800,853 830,840 860,822 900,798 935,790 970,786 990,790 1010,793 1050,793 1080,787 1110,773 1130,770 1160,773 1190,778 1250,778 1280,760 1300,748 1330,730 1340,722 1370,711 1410,703 1450,692 1480,683 1520,678 1560,667 1620,658 1680,646 1720,632 1750,626', '#3030ff'],
 ['1126,857 1200,850 1240,844 1300,835 1360,826 1420,820 1500,814 1600,809 1700,802 1753,798', '#0a920a']]
  .forEach(([p, c]) => line(pr, pairs(p), c, 6, { 'stroke-dasharray': '8 8' }));
line(pr, early.filter(p => p[0] < 385), '#7a10a8', 3);
line(pr, price.filter(p => p[0] <= 747), '#fff', 6, { 'stroke-dasharray': '7 7' });
line(pr, price.filter(p => p[0] >= 747 && p[0] < 1490), '#fff', 9, { 'stroke-dasharray': '8 4' });
line(pr, price.filter(p => p[0] > 1489), '#fff', 7, { 'stroke-dasharray': '7 7' });
for (let i = 0; i + 1 < price.length; i++) {
  const [x0, y0] = price[i], [x1, y1] = price[i + 1];
  if (x0 < 860) continue;
  const late = x0 > 1480, step = late ? 5 : 7, h = late ? 15 : 9;
  for (let x = x0; x < x1; x += step) {
    const y = y0 + (y1 - y0) * (x - x0) / (x1 - x0);
    rect(pr, x, y - h / 2 + rnd() * 10 - 5, 2, h, '#fff');
  }
}
rect(pr, 1751, 605, 2, 48, '#fff');
[[1459, 589, 1, '20 10'], [1500, 603, 1], [1600, 610, 2], [1623, 580, 2]]
  .forEach(([x, y, w, d]) => add(pr, 'path', { d: `M${x} ${y + w / 2}H1809`, fill: 'none', stroke: '#ff0808', 'stroke-width': w, 'stroke-dasharray': d || 'none' }));
[[1309, 688, 1], [1056, 738, 1], [982, 780, 1, '20 10'], [1102, 830, 1, '20 10'], [1395, 663, 1, '5 4'], [1390, 703, 1, '5 4'], [1475, 626, 1, '20 10'], [1547, 646, 2]]
  .forEach(([x, y, w, d]) => {
    line(pr, [[x, y + w / 2], [1809, y + w / 2]], '#0c300c', w + 4, { opacity: .5 });
    line(pr, [[x, y + w / 2], [1809, y + w / 2]], '#2fae2f', w, d ? { 'stroke-dasharray': d } : {});
  });
rect(pr, 5, 611, 1804, 1, '#9c4040');
pairs(`62,888 109,888 211,886 276,888 305,888 349,888 424,884 533,874 617,867 679,858 729,852 854,782 889,764 897,772 917,772 960,790 1022,777 1050,771 1118,746 1199,763 1227,751 1340,700 1648,578`)
  .forEach(([x, y]) => add(pr, 'use', { href: '#mark', x: x - 6, y: y - 6, width: 12, height: 12 }));
pairs(`553,895 630,886 687,879 734,877 860,804 893,797 912,792 952,798 985,813 1032,792 1056,791 1164,804 1199,789 1238,763 1360,707 1672,599`)
  .forEach(([x, y]) => add(pr, 'use', { href: '#buy', x: x - 6, y: y - 7, width: 12, height: 14 }));
vcursor(pr);

/* volume */
const vol = document.getElementById('volume');
const red = '#f00000', green = '#00ee00';
for (let x = 1363; x < 1478; x += 2) {
  const h = 8 + rnd() * 20;
  rect(vol, x, 1036 - h, 1, h, rnd() > .5 ? red : green);
}
for (let x = 1366; x < 1740; x += 3) {
  const h = (x < 1470 ? 10 : 18) + rnd() * (x < 1480 ? 16 : 24);
  rect(vol, x, 1036 - h, 1, h, rnd() > .4 ? green : red);
}
pairs('1391,975 1681,982 1617,995 1663,990 1655,995 1493,986 1504,984 1482,999 1470,1001 1438,1004 1512,997 1518,1001 1528,998 1584,992 1609,992 1626,996 1650,1002').forEach(([x, y]) => rect(vol, x, y, x === 1391 ? 2 : 1, 1036 - y, green));
pairs('1389,1000 1420,1004 1484,979 1498,983 1508,974 1572,976 1580,984 1597,979 1600,985 1604,966 1516,997 1593,997 1637,991 1660,995 1728,984 1752,981').forEach(([x, y]) => rect(vol, x, y, 2, 1036 - y, red));
rect(vol, 1486, 976, 6, 60, '#ff4040'); rect(vol, 1487, 984, 4, 52, '#2cff2c');
rect(vol, 1737, 939, 7, 97, '#ff4040'); rect(vol, 1740, 941, 2, 65, '#f00'); rect(vol, 1738, 1004, 5, 32, '#2cff2c');
rect(vol, 1744, 971, 6, 65, '#ff4040'); rect(vol, 1745, 990, 4, 46, '#2cff2c');
rect(vol, 1752, 1021, 2, 15, green);
vcursor(vol);
```
